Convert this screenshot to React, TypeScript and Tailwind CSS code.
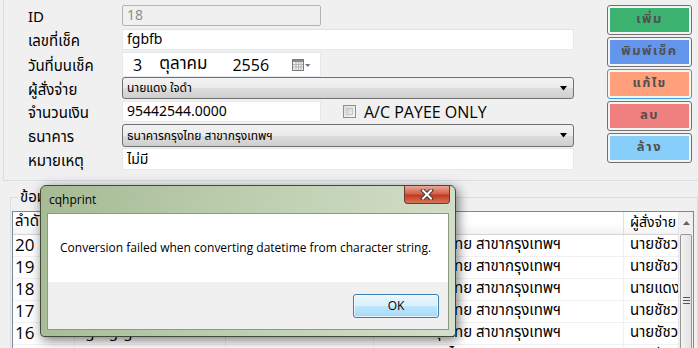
import React from 'react';

const thai = "font-['Tahoma','Noto_Sans_Thai','Leelawadee','DejaVu_Sans',sans-serif]";
const ui = "font-['Segoe_UI','Open_Sans','Noto_Sans',sans-serif]";

const rows = [
    { no: '20', chq: 'fgbfb', date: '3/10/2556 10:12:00', bank: 'ธนาคารกรุงไทย สาขากรุงเทพฯ', payer: 'นายชัชวาลย์ ใจดี' },
    { no: '19', chq: 'dfgdfg', date: '3/10/2556 10:05:00', bank: 'ธนาคารกรุงไทย สาขากรุงเทพฯ', payer: 'นายชัชวาลย์ ใจดี' },
    { no: '18', chq: 'fgbfb', date: '3/10/2556 09:58:00', bank: 'ธนาคารกรุงไทย สาขากรุงเทพฯ', payer: 'นายแดง ใจดำ' },
    { no: '17', chq: 'sdfsdf', date: '2/10/2556 16:40:00', bank: 'ธนาคารกรุงไทย สาขากรุงเทพฯ', payer: 'นายชัชวาลย์ ใจดี' },
    { no: '16', chq: 'fgnfgfgf', date: '2/10/2556 10:12:00', bank: 'ธนาคารกรุงไทย สาขากรุงเทพฯ', payer: 'นายชัชวาลย์ ใจดี' },
    { no: '15', chq: 'fghfgh', date: '2/10/2556 09:30:00', bank: 'ธนาคารกรุงไทย สาขากรุงเทพฯ', payer: 'นายชัชวาลย์ ใจดี' },
];

const buttons = [
    { label: 'เพิ่ม', fill: 'bg-[#3cb371]', ring: 'border-[#707070]' },
    { label: 'พิมพ์เช็ค', fill: 'bg-[#6495ed]', ring: 'border-[#707070]' },
    { label: 'แก้ไข', fill: 'bg-[#ffa07a]', ring: 'border-[#3c9fd8]' },
    { label: 'ลบ', fill: 'bg-[#f08080]', ring: 'border-[#707070]' },
    { label: 'ล้าง', fill: 'bg-[#87cefa]', ring: 'border-[#707070]' },
];

function Label({ children }: { children: React.ReactNode }) {
    return <div className={`w-[94px] pt-[6px] text-[15px] text-black ${thai}`}>{children}</div>;
}

function ComboArrow() {
    return (
        <svg width="8" height="5" viewBox="0 0 8 5" className="ml-auto mr-[3px]">
            <path d="M0 0 H7 L3.5 4.5 Z" fill="#000" />
        </svg>
    );
}

function Combo({ text, h }: { text: string; h: string }) {
    return (
        <div className={`${h} w-[452px] flex items-center rounded-[3px] border border-[#707070] bg-[linear-gradient(#f2f2f2,#ebebeb_50%,#dddddd_50%,#cfcfcf)] pl-[4px] pr-[2px]`}>
            <span className={`text-[12px] text-black ${thai}`}>{text}</span>
            <ComboArrow />
        </div>
    );
}

export default function App() {
    return (
        <div className="relative w-[698px] h-[348px] overflow-hidden bg-[#f0f0f0]">
            {/* top form */}
            <div className="h-[181px] ml-[3px] border-l border-b border-[#d5dfe5] flex">
                <div className="flex flex-col pt-[5px] pl-[24px]">
                    <div className="flex items-center h-[21px]">
                        <Label>ID</Label>
                        <div className="h-[21px] w-[199px] flex items-center rounded-[2px] border border-[#b3b3b3] bg-[#f0f0f0] pl-[4px]">
                            <span className={`text-[14px] text-[#8d8d8d] ${thai}`}>18</span>
                        </div>
                    </div>
                    <div className="flex items-center h-[21px] mt-[3px]">
                        <Label>เลขที่เช็ค</Label>
                        <div className="h-[21px] w-[452px] flex items-center border border-[#e3e9ef] border-t-[#dfe3e8] bg-white pl-[4px]">
                            <span className={`text-[14px] text-black ${thai}`}>fgbfb</span>
                        </div>
                    </div>
                    <div className="flex items-center h-[25px] mt-[2px]">
                        <Label>วันที่บนเช็ค</Label>
                        <div className={`h-[25px] w-[199px] flex items-center border border-[#e3e9ef] bg-white text-[16px] text-black ${ui}`}>
                            <span className="ml-[10px]">3</span>
                            <span className={`ml-[17px] text-[17px] ${thai}`}>ตุลาคม</span>
                            <span className="ml-[25px]">2556</span>
                            <svg width="19" height="12" viewBox="0 0 19 12" className="ml-auto mr-[9px]">
                                <rect x="0.5" y="0.5" width="11" height="11" fill="#eeeeee" stroke="#7a7a7a" />
                                <rect x="1" y="1" width="10" height="2" fill="#8a8a8a" />
                                <path d="M1 5.5 H11 M1 8 H11 M4 3 V11 M6.5 3 V11 M9 3 V11" stroke="#b5b5b5" strokeWidth="1" />
                                <path d="M13 5 H18.5 L15.75 8 Z" fill="#6b7b8c" />
                            </svg>
                        </div>
                    </div>
                    <div className="flex items-center h-[22px]">
                        <Label>ผู้สั่งจ่าย</Label>
                        <Combo text="นายแดง ใจดำ" h="h-[22px]" />
                    </div>
                    <div className="flex items-center h-[21px] mt-[2px]">
                        <Label>จำนวนเงิน</Label>
                        <div className="h-[21px] w-[199px] flex items-center border border-[#e3e9ef] bg-white pl-[4px]">
                            <span className={`text-[14px] text-black ${thai}`}>95442544.0000</span>
                        </div>
                        <div className="ml-[22px] flex items-center gap-[8px]">
                            <div className="w-[13px] h-[13px] border border-[#8e8f8f] bg-[linear-gradient(135deg,#dcdcdc,#f6f6f6)] p-[2px]">
                                <div className="w-full h-full border border-[#c6c6c6] bg-[linear-gradient(135deg,#cfcfcf,#f0f0f0)]" />
                            </div>
                            <span className={`text-[16px] text-black ${ui}`}>A/C PAYEE ONLY</span>
                        </div>
                    </div>
                    <div className="flex items-center h-[23px] mt-[2px]">
                        <Label>ธนาคาร</Label>
                        <Combo text="ธนาคารกรุงไทย สาขากรุงเทพฯ" h="h-[23px]" />
                    </div>
                    <div className="flex items-center h-[22px] mt-[1px]">
                        <Label>หมายเหตุ</Label>
                        <div className="h-[22px] w-[452px] flex items-center border border-[#e3e9ef] bg-white pl-[4px]">
                            <span className={`text-[14px] text-black ${thai}`}>ไม่มี</span>
                        </div>
                    </div>
                </div>

                <div className="ml-auto mr-[6px] pt-[5px] flex flex-col gap-[2px]">
                    {buttons.map((b) => (
                        <div key={b.label} className={`w-[85px] h-[30px] rounded-[3px] border ${b.ring} bg-[#f4f4f4] p-[2px]`}>
                            <div className={`w-full h-full ${b.fill} flex items-center justify-center text-[13px] font-bold tracking-[1.5px] text-[#505050] ${thai}`}>
                                {b.label}
                            </div>
                        </div>
                    ))}
                </div>
            </div>

            {/* list group */}
            <div className="mt-[16px] ml-[10px] w-[688px] h-[200px] border-l border-t border-r border-[#d5dfe5]">
                <div className={`-mt-[11px] ml-[7px] w-fit px-[2px] bg-[#f0f0f0] text-[15px] text-black ${thai}`}>ข้อมูลเช็ค</div>
                <div className="mt-[1px] ml-[1px] w-[682px] h-[160px] border border-[#828790] bg-white flex">
                    <div className="flex-1 flex flex-col overflow-hidden">
                        <div className={`h-[23px] flex border-b border-[#d5d5d5] bg-[linear-gradient(#ffffff,#ffffff_50%,#f3f3f3)] text-[15px] text-black ${thai}`}>
                            <div className="w-[62px] pl-[2px] flex items-center border-r border-[#e0e0e0]">ลำดับ</div>
                            <div className="w-[151px] pl-[5px] flex items-center border-r border-[#e0e0e0]">เลขที่เช็ค</div>
                            <div className="w-[148px] pl-[5px] flex items-center border-r border-[#e0e0e0]">วันที่บนเช็ค</div>
                            <div className="w-[250px] pl-[5px] flex items-center border-r border-[#e0e0e0]">ธนาคาร</div>
                            <div className="flex-1 pl-[6px] flex items-center whitespace-nowrap text-[14px]">ผู้สั่งจ่าย</div>
                        </div>
                        {rows.map((r) => (
                            <div key={r.no} className={`h-[22px] shrink-0 flex border-b border-[#f0f0f0] text-[15px] text-black ${thai}`}>
                                <div className={`w-[62px] pl-[2px] flex items-center border-r border-[#f0f0f0] text-[17px] ${ui}`}>{r.no}</div>
                                <div className="w-[151px] pl-[5px] flex items-center border-r border-[#f0f0f0]">{r.chq}</div>
                                <div className="w-[148px] pl-[5px] flex items-center border-r border-[#f0f0f0] whitespace-nowrap overflow-hidden">{r.date}</div>
                                <div className="w-[250px] pl-[5px] flex items-center border-r border-[#f0f0f0] whitespace-nowrap">{r.bank}</div>
                                <div className="flex-1 pl-[6px] flex items-center whitespace-nowrap overflow-hidden">{r.payer}</div>
                            </div>
                        ))}
                    </div>
                    <div className="w-[15px] flex flex-col bg-[#f0f0f0] border-l border-[#e8e8e8]">
                        <div className="h-[22px] flex items-center justify-center">
                            <svg width="7" height="4" viewBox="0 0 7 4">
                                <path d="M0 4 L3.5 0 L7 4 Z" fill="#606060" />
                            </svg>
                        </div>
                        <div className="mx-[1px] flex-1 rounded-[2px] border border-[#979797] bg-[linear-gradient(90deg,#f3f3f3,#e2e2e2)] flex flex-col items-center pt-[62px] gap-[2px]">
                            <div className="w-[7px] h-px bg-[#555]" />
                            <div className="w-[7px] h-px bg-[#555]" />
                            <div className="w-[7px] h-px bg-[#555]" />
                        </div>
                    </div>
                </div>
            </div>

            {/* error dialog */}
            <div className="absolute left-[40px] top-[185px] w-[416px] h-[152px] rounded-t-[6px] rounded-b-[4px] border border-[#3f4a38] bg-[linear-gradient(100deg,#a6ba94,#c0d1b3_55%,#d3dfca)] shadow-[2px_3px_12px_rgba(0,0,0,0.55)] flex flex-col px-[6px] pb-[6px]">
                <div className="h-[27px] flex items-start">
                    <span className={`mt-[5px] ml-[2px] text-[12px] text-black ${ui}`}>cqhprint</span>
                    <div className="ml-auto -mr-[1px] w-[46px] h-[18px] rounded-b-[4px] border border-t-0 border-[#6b3b33] bg-[linear-gradient(#e9a895,#d3604a_45%,#c23a20_55%,#d97557)] flex items-center justify-center">
                        <svg width="14" height="11" viewBox="0 0 14 11">
                            <path d="M3 1.5 L11 9.5 M11 1.5 L3 9.5" stroke="#3a3a3a" strokeWidth="4" strokeLinecap="square" />
                            <path d="M3 1.5 L11 9.5 M11 1.5 L3 9.5" stroke="#ffffff" strokeWidth="2" strokeLinecap="square" />
                        </svg>
                    </div>
                </div>
                <div className="flex-1 flex flex-col border border-[#8c9b80]">
                    <div className="h-[68px] bg-white flex items-center pl-[12px]">
                        <span className={`text-[12px] text-black ${ui}`}>Conversion failed when converting datetime from character string.</span>
                    </div>
                    <div className="flex-1 bg-[#f0f0f0] flex justify-end items-start pt-[12px] pr-[9px]">
                        <div className={`w-[86px] h-[24px] rounded-[3px] border border-[#3c7fb1] bg-[linear-gradient(#eaf6fd,#d9f0fc_50%,#bee6fd_50%,#a7d9f5)] shadow-[inset_0_0_0_1px_rgba(255,255,255,0.7)] flex items-center justify-center text-[12px] text-black ${ui}`}>
                            OK
                        </div>
                    </div>
                </div>
            </div>
        </div>
    );
}
